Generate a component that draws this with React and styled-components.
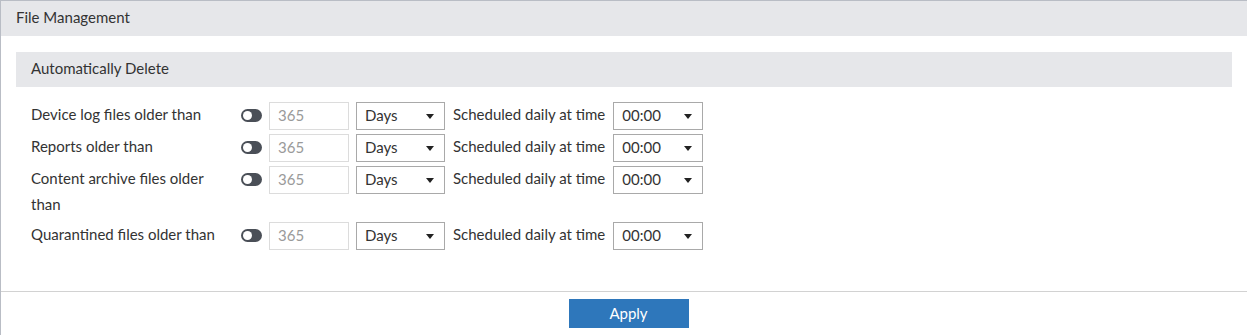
import React from "react";
import styled, { createGlobalStyle } from "styled-components";

const GlobalStyle = createGlobalStyle`
  html, body {
    margin: 0;
    padding: 0;
    background: #fff;
  }
  body {
    font-family: Lato, "Noto Sans", sans-serif;
    font-size: 15px;
    color: #333;
  }
`;

const Page = styled.div`
  height: 100vh;
  display: flex;
  flex-direction: column;
  border-left: 1px solid #b9bdc5;
  border-top: 1px solid #b9bdc5;
  box-sizing: border-box;
`;

const PanelHeader = styled.div`
  height: 35px;
  box-sizing: border-box;
  background-color: #e6e7ea;
  display: flex;
  align-items: center;
  padding: 0 0 3px 15px;
  flex-shrink: 0;
`;

const Content = styled.div`
  flex: 1;
  padding: 16px 15px 0 15px;
`;

const SectionHeader = styled.div`
  height: 35px;
  box-sizing: border-box;
  background-color: #e6e7ea;
  display: flex;
  align-items: center;
  padding: 0 0 3px 15px;
`;

const Rows = styled.div`
  display: flex;
  flex-direction: column;
  gap: 4px;
  padding: 15px 0 0 15px;
`;

const Row = styled.div`
  display: flex;
  align-items: flex-start;
`;

const Label = styled.div`
  width: 200px;
  margin-right: 10px;
  line-height: 26px;
  margin-top: -1px;
  padding-bottom: 1px;
`;

const Toggle = styled.span`
  position: relative;
  width: 21px;
  height: 13px;
  margin-top: 7px;
  border-radius: 7px;
  background-color: #4a4f57;
  flex-shrink: 0;
  &::after {
    content: "";
    position: absolute;
    left: 2px;
    top: 2px;
    width: 9px;
    height: 9px;
    border-radius: 50%;
    background: #fff;
  }
`;

const NumberBox = styled.div`
  width: 80px;
  height: 28px;
  box-sizing: border-box;
  margin-left: 7px;
  border: 1px solid #dcdcdc;
  color: #9a9a9a;
  padding: 0 0 2px 8px;
  display: flex;
  align-items: center;
`;

const Select = styled.div`
  width: ${(p) => p.width}px;
  height: 28px;
  box-sizing: border-box;
  margin-left: ${(p) => p.gap}px;
  border: 1px solid #a9a9a9;
  padding: 0 10px 2px 8px;
  display: flex;
  align-items: center;
  justify-content: space-between;
  color: #333;
  &::after {
    content: "";
    border-left: 4px solid transparent;
    border-right: 4px solid transparent;
    border-top: 5px solid #222;
    margin-top: 3px;
  }
`;

const Inline = styled.span`
  margin-left: 8px;
  line-height: 24px;
`;

const Footer = styled.div`
  flex-shrink: 0;
  height: 44px;
  border-top: 1px solid #d2d2d2;
  display: flex;
  justify-content: center;
  align-items: flex-start;
  padding: 7px 0 0 9px;
  box-sizing: border-box;
`;

const ApplyButton = styled.button`
  width: 120px;
  height: 29px;
  border: none;
  padding: 0 0 2px;
  background-color: #2e77bb;
  color: #fff;
  font-family: Lato, "Noto Sans", sans-serif;
  font-size: 15px;
  cursor: pointer;
`;

const items = [
  "Device log files older than",
  "Reports older than",
  "Content archive files older than",
  "Quarantined files older than",
];

function App() {
  return (
    <>
      <GlobalStyle />
      <Page>
        <PanelHeader>File Management</PanelHeader>
        <Content>
          <SectionHeader>Automatically Delete</SectionHeader>
          <Rows>
            {items.map((label) => (
              <Row key={label}>
                <Label>{label}</Label>
                <Toggle />
                <NumberBox>365</NumberBox>
                <Select width={89} gap={7}>Days</Select>
                <Inline>Scheduled daily at time</Inline>
                <Select width={90} gap={8}>00:00</Select>
              </Row>
            ))}
          </Rows>
        </Content>
        <Footer>
          <ApplyButton>Apply</ApplyButton>
        </Footer>
      </Page>
    </>
  );
}

export default App;
